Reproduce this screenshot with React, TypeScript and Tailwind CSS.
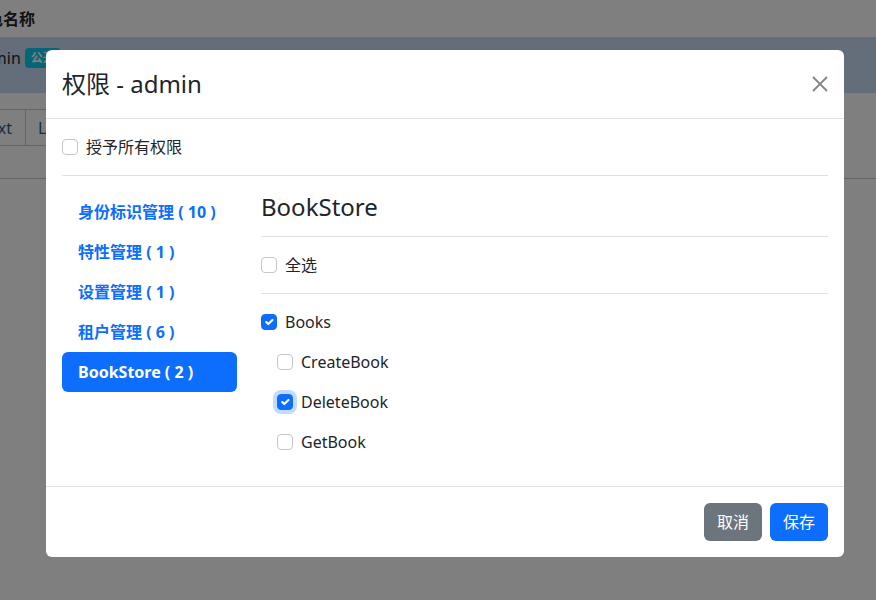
const font = "font-['Noto_Sans','Noto_Sans_CJK_SC',sans-serif]";

function Check({ checked, focus }: { checked?: boolean; focus?: boolean }) {
  return (
    <span
      className={`flex w-4 h-4 shrink-0 items-center justify-center rounded-[4px] border ${
        checked ? "bg-[#0d6efd] border-[#0d6efd]" : "bg-white border-[#c4c7ca]"
      } ${focus ? "shadow-[0_0_0_4px_rgba(13,110,253,0.25)]" : ""}`}
    >
      {checked && (
        <svg viewBox="0 0 20 20" className="w-4 h-4">
          <path d="m6 10 3 3 6-6" fill="none" stroke="#fff" strokeWidth="3" strokeLinecap="round" strokeLinejoin="round" />
        </svg>
      )}
    </span>
  );
}

function CheckRow({ label, checked, focus, indent }: { label: string; checked?: boolean; focus?: boolean; indent?: boolean }) {
  return (
    <div className={`flex items-center gap-2 h-6 ${indent ? "pl-4" : ""}`}>
      <Check checked={checked} focus={focus} />
      <span className="text-base leading-6 text-[#212529]">{label}</span>
    </div>
  );
}

const groups = [
  { name: "身份标识管理 ( 10 )" },
  { name: "特性管理 ( 1 )" },
  { name: "设置管理 ( 1 )" },
  { name: "租户管理 ( 6 )" },
  { name: "BookStore ( 2 )", active: true },
];

export default function App() {
  return (
    <div className={`relative w-[876px] h-[600px] overflow-hidden bg-white ${font} text-[#212529]`}>
      {/* page behind the dialog */}
      <div className="flex h-[37px] items-center">
        <span className="-ml-[29px] font-bold text-base">角色名称</span>
      </div>
      <div className="flex h-[56px] items-start bg-[#c8dcf4] pt-[9px]">
        <span className="-ml-[27px] text-base leading-6">admin</span>
        <span className="ml-[4px] mt-[2px] rounded-[4px] bg-[#0dcaf0] px-[6px] text-xs font-bold leading-5 text-white">公开</span>
      </div>
      <div className="mt-4 flex h-[37px] w-[60px] border-y border-[#c8c8c8] text-base">
        <span className="flex w-[26px] items-center justify-end border-r border-[#c8c8c8] pr-[13px] text-[#2c5a8c]">Text</span>
        <span className="flex items-center pl-3 text-[#2c5a8c]">List</span>
      </div>
      <div className="mt-[32px] border-b border-[#c8c8c8]" />

      <div className="absolute inset-0 bg-black/50" />

      {/* dialog */}
      <div className="absolute left-[46px] top-[50px] w-[798px] rounded-[6px] bg-white">
        <div className="flex items-center justify-between border-b border-[#dee2e6] p-4">
          <h5 className="text-2xl leading-9 text-[#212529]">权限 - admin</h5>
          <svg viewBox="0 0 16 16" className="w-4 h-4">
            <path d="M1 1 15 15M15 1 1 15" stroke="#858585" strokeWidth="1.8" />
          </svg>
        </div>

        <div className="p-4">
          <CheckRow label="授予所有权限" />
          <div className="my-4 border-t border-[#dee2e6]" />

          <div className="flex gap-6">
            <div className="flex w-[175px] shrink-0 flex-col">
              {groups.map((g) => (
                <div
                  key={g.name}
                  className={`flex h-10 items-center whitespace-pre rounded-[6px] px-4 text-base font-bold ${
                    g.active ? "bg-[#0d6efd] text-white" : "text-[#0d6efd]"
                  }`}
                >
                  {g.name}
                </div>
              ))}
            </div>

            <div className="flex-1">
              <h4 className="text-2xl leading-[29px] text-[#212529]">BookStore</h4>
              <div className="mt-[15px] mb-4 border-t border-[#dee2e6]" />
              <CheckRow label="全选" />
              <div className="my-4 border-t border-[#dee2e6]" />
              <div className="flex flex-col gap-4 pb-4">
                <CheckRow label="Books" checked />
                <CheckRow label="CreateBook" indent />
                <CheckRow label="DeleteBook" checked focus indent />
                <CheckRow label="GetBook" indent />
              </div>
            </div>
          </div>
        </div>

        <div className="flex justify-end gap-2 border-t border-[#dee2e6] p-4">
          <button className="h-[38px] rounded-[6px] bg-[#6c757d] px-[13px] text-base text-white">取消</button>
          <button className="h-[38px] rounded-[6px] bg-[#0d6efd] px-[13px] text-base text-white">保存</button>
        </div>
      </div>
    </div>
  );
}
